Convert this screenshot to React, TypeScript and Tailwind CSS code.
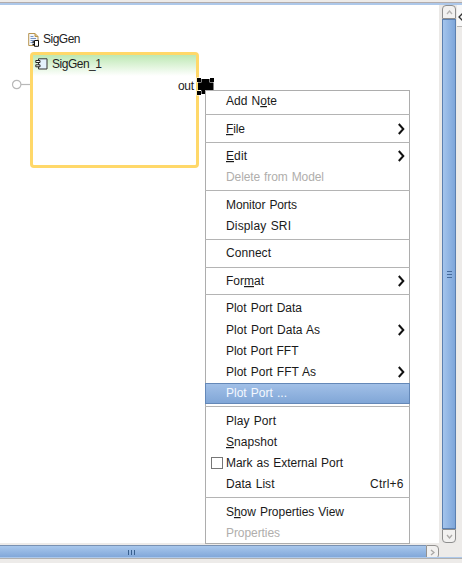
import React from "react";

type Item = {
  label: string;
  w: number;
  key?: number;
  sub?: boolean;
  disabled?: boolean;
  active?: boolean;
  check?: boolean;
  accel?: string;
};

const groups: Item[][] = [
  [{ label: "Add Note", w: 51, key: 5 }],
  [{ label: "File", w: 19, key: 0, sub: true }],
  [
    { label: "Edit", w: 21, key: 0, sub: true },
    { label: "Delete from Model", w: 98, disabled: true },
  ],
  [
    { label: "Monitor Ports", w: 71 },
    { label: "Display SRI", w: 65 },
  ],
  [{ label: "Connect", w: 45 }],
  [{ label: "Format", w: 38, key: 3, sub: true }],
  [
    { label: "Plot Port Data", w: 76 },
    { label: "Plot Port Data As", w: 94, sub: true },
    { label: "Plot Port FFT", w: 72.5 },
    { label: "Plot Port FFT As", w: 90, sub: true },
    { label: "Plot Port ...", w: 61, active: true },
  ],
  [
    { label: "Play Port", w: 50 },
    { label: "Snapshot", w: 51, key: 0 },
    { label: "Mark as External Port", w: 117, check: true },
    { label: "Data List", w: 48.5, accel: "Ctrl+6" },
  ],
  [
    { label: "Show Properties View", w: 118, key: 1 },
    { label: "Properties", w: 54, disabled: true },
  ],
];

function Label({ text, w, mnemonic = -1 }: { text: string; w: number; mnemonic?: number }) {
  return (
    <svg width={w + 4} height="18" className="block shrink-0 overflow-visible" fill="currentColor">
      <text x="0" y="13" fontSize="12" wordSpacing="0.8" textLength={w} lengthAdjust="spacing">
        {mnemonic < 0 ? (
          text
        ) : (
          <>
            {text.slice(0, mnemonic)}
            <tspan textDecoration="underline">{text[mnemonic]}</tspan>
            {text.slice(mnemonic + 1)}
          </>
        )}
      </text>
    </svg>
  );
}

function MenuRow({ item }: { item: Item }) {
  const tone = item.active
    ? "bg-linear-to-b from-[#a3c1e8] to-[#7fa5d6] text-[#f4f8fe] outline-1 -outline-offset-1 outline-[#6488b8]"
    : item.disabled
      ? "text-[#b0aeac]"
      : "text-[#1a1a1a]";
  return (
    <div className={"flex h-[21.2px] items-center pr-[5px] pl-[6px] " + tone}>
      <div className="flex w-[15px] shrink-0 items-center">
        {item.check && <span className="size-3 border border-[#777] bg-white" />}
      </div>
      <Label text={item.label} w={item.w} mnemonic={item.key} />
      {item.accel && (
        <div className="ml-auto -mr-[2px]">
          <Label text={item.accel} w={33.5} />
        </div>
      )}
      {item.sub && (
        <svg className="ml-auto" width="7" height="12" viewBox="0 0 7 12" fill="none" stroke="#111" strokeWidth="2">
          <path d="M.8 1L5.3 6L.8 11" />
        </svg>
      )}
    </div>
  );
}

function Menu() {
  return (
    <div className="absolute top-[90px] left-[205px] w-[205px] border border-[#adadad] bg-white">
      <div className="-mx-px -my-[0.5px]">
        {groups.map((group, i) => (
          <React.Fragment key={i}>
            {i > 0 && (
              <div className="flex h-[6.3px] items-center">
                <div className="h-px w-full bg-[#b4b4b4]" />
              </div>
            )}
            {group.map((item) => (
              <MenuRow key={item.label} item={item} />
            ))}
          </React.Fragment>
        ))}
      </div>
    </div>
  );
}

function Diagram() {
  return (
    <>
      <div className="absolute top-[30px] left-[28px] flex items-center">
        <svg width="12" height="15" viewBox="0 0 12 15">
          <path d="M.7 1.5H7L10 4.5V13.5H.7Z" fill="#f4f7fc" stroke="#b89550" />
          <path d="M7 1.5V4.5H10" fill="#e5c27a" stroke="#b89550" />
          <path d="M2.5 4.5H5.5M2.5 6.5H8M2.5 8.5H6M2.5 10.5H5" stroke="#7895c4" />
          <path d="M6.5 8.5H10.5V14.3H6.5Z" fill="#fff" stroke="#111" />
          <path d="M4.5 10H7M4.5 12.5H7" stroke="#111" strokeWidth="1.4" />
        </svg>
        <div className="ml-[3px] text-[#222]">
          <Label text="SigGen" w={37.5} />
        </div>
      </div>
      <div className="absolute top-[52px] left-[30px] h-[116px] w-[169px] rounded-[4px] border-3 border-[#ffd869] bg-white">
        <div className="h-[21px] bg-linear-to-b from-[#bde8b3] to-white pl-[2px] text-[#222]">
          <div className="flex h-[17px] items-center">
            <svg width="13" height="12" viewBox="0 0 13 12">
              <path d="M3.5 .8H12V11H3.5Z" fill="#e4f2fc" stroke="#333" />
              <path d="M.8 2.5H5V4.5H.8ZM.8 6.8H5V8.8H.8Z" fill="#fff" stroke="#222" />
            </svg>
            <div className="ml-[4px]">
              <Label text="SigGen_1" w={50} />
            </div>
          </div>
        </div>
        <div className="mt-px -mr-[2px] flex justify-end text-[#222]">
          <Label text="out" w={16} />
        </div>
      </div>
      <svg className="absolute top-[78px] left-[11px]" width="20" height="13" fill="none" stroke="#b8b8b8" strokeWidth="1.2">
        <circle cx="5.7" cy="6.5" r="4.2" />
        <path d="M10 6.5H19" />
      </svg>
      <svg className="absolute top-[77px] left-[196px]" width="19" height="19">
        <path d="M2 5H5V2H14V5H17.5V13.5H9V17H5V13H2Z" fill="#000" />
        <path d="M.5 .5H5.5V5.5H.5ZM13.5 .5H18.5V5.5H13.5ZM.5 13.5H5.5V18.5H.5Z" fill="#fff" />
        <path d="M1 1H5V5H1ZM14 1H18V5H14ZM1 14H5V18H1Z" fill="#000" />
      </svg>
    </>
  );
}

function VerticalBar() {
  return (
    <div className="flex w-[18px] shrink-0 flex-col bg-[#ebe9e7] pl-[3px]">
      <div className="flex h-[14px] w-[14px] items-center justify-center rounded-t-[4px] border border-[#8e8e8e] bg-[#f2f1f0]">
        <svg width="7" height="5" fill="none" stroke="#b5b3b1" strokeWidth="1.3">
          <path d="M1 4L3.5 1L6 4" />
        </svg>
      </div>
      <div className="flex w-[14px] grow flex-col items-center justify-center gap-[2px] border border-[#5c80b0] bg-linear-to-r from-[#a4c4ec] to-[#7ea6da]">
        <i className="h-px w-[5px] bg-[#466b9c]" />
        <i className="h-px w-[5px] bg-[#466b9c]" />
        <i className="h-px w-[5px] bg-[#466b9c]" />
      </div>
      <div className="flex h-[14px] w-[14px] items-center justify-center rounded-b-[4px] border border-[#8e8e8e] bg-[#f2f1f0]">
        <svg width="7" height="5" fill="none" stroke="#aaa8a6" strokeWidth="1.3">
          <path d="M1 1L3.5 4L6 1" />
        </svg>
      </div>
    </div>
  );
}

export default function App() {
  return (
    <div className="relative flex h-[563px] w-[462px] flex-col overflow-hidden bg-[#edebe9] font-['Liberation_Sans',sans-serif] text-[12px]">
      <div className="h-[5px] shrink-0 border-b-2 border-[#adc8ea] bg-[#edebe9]">
        <div className="h-[2px]" />
        <div className="h-px bg-[#b3adad]" />
      </div>
      <div className="flex h-[538px] shrink-0">
        <div className="w-[439px] shrink-0 bg-white" />
        <VerticalBar />
        <div className="grow">
          <div className="h-[22px] border-b border-[#b8b6b4] bg-[#f8f8f8]">
            <svg width="5" height="22" fill="none" stroke="#333" strokeWidth="1.3">
              <path d="M6 8L2 12L6 16" />
            </svg>
          </div>
        </div>
      </div>
      <div className="mt-[2px] flex h-[14px] shrink-0">
        <div className="flex w-[426px] items-center justify-center gap-[2px] border-y border-[#7891b2] bg-linear-to-b from-[#a8c7ec] to-[#7ea5d8] pr-[163px]">
          <i className="h-[5px] w-px bg-[#38608f]" />
          <i className="h-[5px] w-px bg-[#38608f]" />
          <i className="h-[5px] w-px bg-[#38608f]" />
        </div>
        <div className="flex w-[13px] items-center justify-center rounded-r-[4px] border border-[#949290] bg-[#f2f1f0]">
          <svg width="5" height="7" fill="none" stroke="#aaa8a6" strokeWidth="1.3">
            <path d="M1 1L4 3.5L1 6" />
          </svg>
        </div>
      </div>
      <div className="-mt-[2px] h-px shrink-0 bg-[#adc8ea]" />
      <div className="h-px shrink-0 bg-[#b0b0b0]" />
      <Diagram />
      <Menu />
    </div>
  );
}
